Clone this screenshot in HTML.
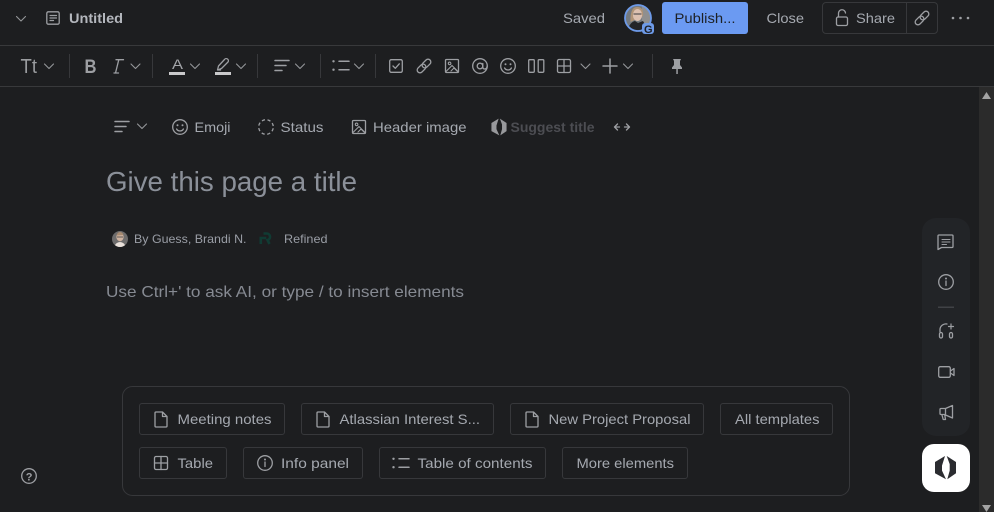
<!DOCTYPE html>
<html lang="en"><head><meta charset="utf-8"><title>Untitled</title>
<style>
html,body{margin:0;padding:0;background:#1d1e20;width:994px;height:512px;overflow:hidden}
svg{display:block}
text{font-family:"Liberation Sans",Arial,sans-serif;font-size:14px;fill:#a5a9b0}
.i{fill:none;stroke:#9d9fa3;stroke-width:1.3;stroke-linecap:round;stroke-linejoin:round}
.b{fill:none;stroke:#37383b;stroke-width:1}
</style></head><body>
<svg width="994" height="512" viewBox="0 0 994 512" xmlns="http://www.w3.org/2000/svg">
<defs>
<path id="chev" d="M0 0l4.500 4.500L9 0" class="i" style="stroke-width:1.100;stroke:#949699"/>
<path id="doc" d="M-5-7.500h6.500l4.500 4.500v9.500a1 1 0 0 1-1 1H-5a1 1 0 0 1-1-1v-13a1 1 0 0 1 1-1zM1.500-7.500V-3h4.500" class="i"/>
<g id="smile"><circle r="7.300" class="i"/><circle cx="-2.500" cy="-1.700" r="1" fill="#9d9fa3"/><circle cx="2.500" cy="-1.700" r="1" fill="#9d9fa3"/><path d="M-3.400 2a3.900 3.900 0 0 0 6.800 0" class="i"/></g>
<g id="img"><rect x="-6.500" y="-6.500" width="13" height="13" rx="1" class="i"/><circle cx="-2.400" cy="-2.600" r="1.300" class="i" style="stroke-width:1.100"/><path d="M-6 5.500l6-6 6 6M-1 5L2 2l3.500 3.500" class="i" style="stroke-width:1.100"/></g>
<g id="grid"><rect x="-6.500" y="-6.500" width="13" height="13" rx="1.500" class="i"/><path d="M0-6.500v13M-6.500 0h13" class="i"/></g>
<g id="link" transform="rotate(-45)"><rect x="-8.500" y="-2.800" width="10" height="5.600" rx="2.800" class="i"/><rect x="-1.500" y="-2.800" width="10" height="5.600" rx="2.800" class="i"/></g>
<g id="logo"><path d="M-.5-11.600L-10.500-5.600V5.700L.5 11.700-3.500 3V-2z"/><path d="M1.200-11.600L10.500-5.600V5.700L1.800 11.700 4.200 3V-3.500z"/></g>
<g id="lines"><path d="M-7-5.500H7M-7-.5H4M-7 4.500H0" class="i" style="stroke-width:1.500"/></g>
<g id="toc"><circle cx="-7.500" cy="-4.200" r="1.200" fill="#9d9fa3"/><circle cx="-7.500" cy="4.200" r="1.200" fill="#9d9fa3"/><path d="M-2-4.200H8M-2 4.200H8" class="i" style="stroke-width:1.500"/></g>
<clipPath id="av1"><circle cx="638" cy="18" r="13"/></clipPath>
<clipPath id="av2"><circle cx="120" cy="239" r="8"/></clipPath>
</defs>

<rect width="994" height="512" fill="#1d1e20"/>
<rect x="0" y="45" width="994" height="1" fill="#38393b"/>
<rect x="0" y="86" width="994" height="1" fill="#38393b"/>

<!-- top bar -->
<use href="#chev" x="16.500" y="16.500"/>
<rect x="46.800" y="11.800" width="12.400" height="12.400" rx="1.500" class="i"/>
<path d="M50 15.500h6.500M50 18h6.500M50 20.500h3.500" class="i" style="stroke-width:1.200"/>
<text x="69" y="23" font-weight="700" textLength="54" lengthAdjust="spacingAndGlyphs" style="fill:#b4b7bd">Untitled</text>
<text x="563" y="23" textLength="42" lengthAdjust="spacingAndGlyphs">Saved</text>

<g clip-path="url(#av1)">
<rect x="624" y="4" width="28" height="28" fill="#747a80"/>
<path d="M642 4h10v20h-10z" fill="#8f8f8f"/>
<path d="M630.500 22q-.5-15 6.500-15t6 9z" fill="#b09478"/>
<ellipse cx="637.500" cy="15" rx="4.600" ry="6" fill="#dcc0b0"/>
<path d="M633.500 14h8" stroke="#3a3a3e" stroke-width="1"/>
<path d="M627 31q3-9 8-10l3 2 5-2 6 10z" fill="#242428"/>
</g>
<circle cx="638" cy="18" r="13" fill="none" stroke="#6d9ae8" stroke-width="1.800"/>
<rect x="642" y="23" width="12" height="11" rx="3" fill="#6d9ae8"/>
<text x="644" y="32.800" style="font-size:11px;font-weight:700;fill:#1d2026">G</text>

<rect x="662" y="2" width="86" height="32" rx="3" fill="#6b9af2"/>
<text x="674.500" y="23" textLength="61" lengthAdjust="spacingAndGlyphs" style="fill:#1d2125">Publish...</text>
<text x="766.500" y="23" textLength="37.500" lengthAdjust="spacingAndGlyphs">Close</text>
<rect x="822.500" y="2.500" width="115" height="31" rx="3.500" class="b"/>
<path d="M906.500 3v30" class="b"/>
<rect x="836.500" y="17" width="11" height="8.500" rx="1.500" class="i"/>
<path d="M838.500 17v-3.500a3.500 3.500 0 0 1 7-.5" class="i"/>
<text x="856" y="23" textLength="39" lengthAdjust="spacingAndGlyphs">Share</text>
<use href="#link" transform="translate(922 18)"/>
<circle cx="953" cy="18" r="1.300" fill="#9d9fa3"/><circle cx="960.500" cy="18" r="1.300" fill="#9d9fa3"/><circle cx="968" cy="18" r="1.300" fill="#9d9fa3"/>

<!-- toolbar -->
<text x="20.500" y="73" textLength="16.500" lengthAdjust="spacingAndGlyphs" style="font-size:20px;fill:#9a9c9f">Tt</text>
<use href="#chev" x="44.500" y="64"/>
<rect x="69" y="54" width="1" height="24" fill="#37383b"/>
<text x="84.500" y="73" textLength="12" lengthAdjust="spacingAndGlyphs" style="font-size:19px;font-weight:700;fill:#9d9fa3">B</text>
<path d="M118.800 59.700L115.500 73M116 59.700h7.500M114 73h4.500" class="i"/>
<use href="#chev" x="131" y="64"/>
<rect x="152" y="54" width="1" height="24" fill="#37383b"/>
<text x="172" y="69" textLength="11" lengthAdjust="spacingAndGlyphs" style="font-size:13.500px;fill:#a4a6aa">A</text>
<rect x="169" y="72" width="16" height="3" fill="#c9c9cb"/>
<use href="#chev" x="190.500" y="64"/>
<path d="M217.500 70l1-4 6-6.500a1.500 1.500 0 0 1 3.500 2.500l-6.500 6.500zM217.500 70h3" class="i"/>
<rect x="215" y="72" width="16" height="3" fill="#c9c9cb"/>
<use href="#chev" x="236.500" y="64"/>
<rect x="257" y="54" width="1" height="24" fill="#37383b"/>
<use href="#lines" x="282" y="66"/>
<use href="#chev" x="295.500" y="64"/>
<rect x="320" y="54" width="1" height="24" fill="#37383b"/>
<use href="#toc" x="341" y="65.500"/>
<use href="#chev" x="354.500" y="64"/>
<rect x="375" y="54" width="1" height="24" fill="#37383b"/>
<rect x="389.700" y="59.700" width="12.600" height="12.600" rx="1.500" class="i"/>
<path d="M393 66l2.300 2.300 4-4.500" class="i"/>
<use href="#link" transform="translate(424 66)"/>
<use href="#img" x="452" y="66"/>
<circle cx="480" cy="66" r="7.300" class="i"/><circle cx="480" cy="66" r="2.800" class="i"/><path d="M482.800 63.500v3.500q0 2 2 2t2.400-3" class="i"/>
<use href="#smile" x="508" y="66"/>
<rect x="528.700" y="59.700" width="5.600" height="12.600" rx="1" class="i"/><rect x="538.200" y="59.700" width="5.600" height="12.600" rx="1" class="i"/>
<use href="#grid" x="564" y="66"/>
<use href="#chev" x="581" y="64"/>
<path d="M610 59v14M603 66h14" class="i" style="stroke-width:1.500"/>
<use href="#chev" x="623.500" y="64"/>
<rect x="652" y="54" width="1" height="24" fill="#37383b"/>
<path d="M673 59h8l-.5 1-.5 1v4l2 2.500v1.500h-10v-1.500l2-2.500v-4l-.5-1z" fill="#9d9fa3"/>
<rect x="676.300" y="69" width="1.500" height="5" fill="#9d9fa3"/>

<!-- scrollbar -->
<rect x="979" y="87" width="15" height="425" fill="#2b2b2b"/>
<path d="M982 99l4.500-7 4.500 7z" fill="#a3a3a3"/>
<path d="M982 505l4.500 7 4.500-7z" fill="#a3a3a3"/>

<!-- title options -->
<use href="#lines" x="122" y="127"/>
<use href="#chev" x="137.500" y="124"/>
<use href="#smile" x="180" y="127"/>
<text x="194.500" y="132" textLength="36" lengthAdjust="spacingAndGlyphs">Emoji</text>
<circle cx="266" cy="127" r="7.300" class="i" style="stroke-linecap:butt" stroke-dasharray="3.200 2.540" transform="rotate(10 266 127)"/>
<text x="280.500" y="132" textLength="43" lengthAdjust="spacingAndGlyphs">Status</text>
<use href="#img" x="359" y="127"/>
<text x="373" y="132" textLength="93.500" lengthAdjust="spacingAndGlyphs">Header image</text>
<use href="#logo" transform="translate(499 127) scale(.72)" fill="#98999c"/>
<text x="510.500" y="132" textLength="84" lengthAdjust="spacingAndGlyphs" style="fill:#4c4d52;font-weight:700">Suggest title</text>
<path d="M617.500 124l-3 3 3 3M626.500 124l3 3-3 3M615 127h4.500M624.500 127h4.500" class="i"/>

<text x="106" y="191" textLength="251" lengthAdjust="spacingAndGlyphs" style="font-size:28px;fill:#8b9099">Give this page a title</text>

<!-- byline -->
<g clip-path="url(#av2)">
<rect x="112" y="231" width="16" height="16" fill="#6d6c6c"/>
<ellipse cx="120" cy="237" rx="3.600" ry="4.200" fill="#cfb3a0"/>
<path d="M116.500 235.500q1-3.500 3.500-3.500t3.500 3z" fill="#a78a70"/>
<path d="M117 237h6" stroke="#3a3a3a" stroke-width=".8"/>
<path d="M114 247q2-5 6-5t6 5z" fill="#e8e0da"/>
</g>
<text x="134" y="243" textLength="112.500" lengthAdjust="spacingAndGlyphs" style="font-size:12px;fill:#9a9ea6">By Guess, Brandi N.</text>
<path d="M263.500 233.500h3a3.300 3.300 0 0 1 1 6.500l2 4M260.800 244v-6h5.500" fill="none" stroke="#103b33" stroke-width="2.600"/>
<text x="284" y="243" textLength="43.500" lengthAdjust="spacingAndGlyphs" style="font-size:12px;fill:#9a9ea6">Refined</text>

<text x="106" y="297" textLength="358" lengthAdjust="spacingAndGlyphs" style="font-size:16px;fill:#868a92">Use Ctrl+' to ask AI, or type / to insert elements</text>

<!-- templates panel -->
<rect x="122.500" y="386.500" width="727" height="109" rx="10" class="b"/>
<rect x="139.500" y="403.500" width="145" height="31" rx="2.500" class="b"/>
<rect x="301.500" y="403.500" width="192" height="31" rx="2.500" class="b"/>
<rect x="510.500" y="403.500" width="193" height="31" rx="2.500" class="b"/>
<rect x="720.500" y="403.500" width="112" height="31" rx="2.500" class="b"/>
<rect x="139.500" y="447.500" width="87" height="31" rx="2.500" class="b"/>
<rect x="243.500" y="447.500" width="119" height="31" rx="2.500" class="b"/>
<rect x="379.500" y="447.500" width="166" height="31" rx="2.500" class="b"/>
<rect x="562.500" y="447.500" width="125" height="31" rx="2.500" class="b"/>

<use href="#doc" x="161" y="419.500"/>
<text x="177.500" y="424" textLength="94" lengthAdjust="spacingAndGlyphs">Meeting notes</text>
<use href="#doc" x="323" y="419.500"/>
<text x="339.500" y="424" textLength="140.500" lengthAdjust="spacingAndGlyphs">Atlassian Interest S...</text>
<use href="#doc" x="532" y="419.500"/>
<text x="548.500" y="424" textLength="142" lengthAdjust="spacingAndGlyphs">New Project Proposal</text>
<text x="735" y="424" textLength="84.500" lengthAdjust="spacingAndGlyphs">All templates</text>
<use href="#grid" x="161" y="463"/>
<text x="177.500" y="468" textLength="35.500" lengthAdjust="spacingAndGlyphs">Table</text>
<circle cx="265" cy="463" r="7.300" class="i"/><path d="M265 462v4.500" class="i"/><circle cx="265" cy="459.500" r="1" fill="#9d9fa3"/>
<text x="281" y="468" textLength="68" lengthAdjust="spacingAndGlyphs">Info panel</text>
<use href="#toc" x="401" y="463"/>
<text x="417.500" y="468" textLength="115" lengthAdjust="spacingAndGlyphs">Table of contents</text>
<text x="576.500" y="468" textLength="97.500" lengthAdjust="spacingAndGlyphs">More elements</text>

<!-- help -->
<circle cx="29" cy="476" r="7.300" class="i"/>
<text x="25.800" y="480.500" style="font-size:11px;font-weight:700;fill:#9d9fa3">?</text>

<!-- right rail -->
<rect x="922" y="218" width="48" height="218" rx="14" fill="#222427"/>
<path d="M939 235h13a1 1 0 0 1 1 1v10.500a1 1 0 0 1-1 1h-10.500l-3.500 2V236a1 1 0 0 1 1-1z" class="i"/>
<path d="M942 239.500h8M942 242h8M942 244.500h4.500" class="i" style="stroke-width:1.100"/>
<circle cx="946" cy="282" r="7.300" class="i"/><path d="M946 281v4.500" class="i"/><circle cx="946" cy="278.500" r="1" fill="#9d9fa3"/>
<rect x="938" y="306.500" width="16" height="1.500" fill="#404246"/>
<path d="M940 332v-3a6 6 0 0 1 7-5" class="i"/>
<rect x="939.500" y="332.500" width="3" height="5.500" rx="1.500" class="i"/>
<rect x="949.500" y="332.500" width="3" height="5.500" rx="1.500" class="i"/>
<path d="M951 324v5M948.500 326.500h5" class="i" style="stroke-width:1.200"/>
<rect x="938.700" y="366.700" width="11.600" height="10.600" rx="1.500" class="i"/>
<path d="M950.500 371l3.500-2.500v7l-3.500-2.500" class="i"/>
<path d="M945.500 408.500l7-3v12.500l-7-3zM945.500 408.500h-4.500a1 1 0 0 0-1 1v4a1 1 0 0 0 1 1h4.500M942 415l1.200 4.500h2.300l-.7-4.500" class="i"/>

<rect x="922" y="444" width="48" height="48" rx="12" fill="#ffffff"/>
<use href="#logo" transform="translate(945.500 467.600)" fill="#2b2c30"/>
</svg>
</body></html>
